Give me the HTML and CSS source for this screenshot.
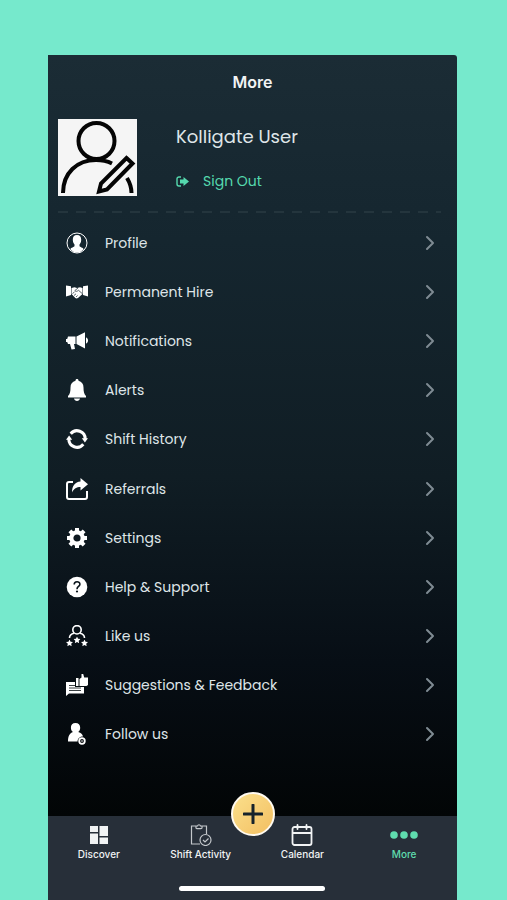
FILE: index.html
```html
<!DOCTYPE html>
<html lang="en">
<head>
    <meta charset="UTF-8">
    <meta name="viewport" content="width=device-width, initial-scale=1.0">
    <title>More</title>
    <link rel="stylesheet" href="styles.css">
</head>
<body>
    <!-- Shared shapes -->
    <svg class="sprite" aria-hidden="true">
        <symbol id="chevron" viewBox="0 0 10 16">
            <path d="M2 2l6 6-6 6" fill="none" stroke="currentColor" stroke-width="2" stroke-linecap="round" stroke-linejoin="round"/>
        </symbol>
        <symbol id="star" viewBox="0 0 10 10">
            <path d="M5 0l1.500 3.300 3.500.4-2.600 2.400.7 3.600L5 7.900 1.900 9.700l.7-3.600L0 3.700l3.500-.4z" fill="currentColor"/>
        </symbol>
    </svg>

    <div class="phone">
        <header class="title-bar">
            <h1>More</h1>
        </header>

        <section class="account">
            <button class="avatar" type="button" aria-label="Edit photo">
                <svg viewBox="0 0 79 77" fill="none" stroke="#050505" stroke-width="4">
                    <circle cx="38.500" cy="22" r="18"/>
                    <path d="M5 74C5 54 19 41 38 41c6 0 11 1 16 3.500M69 59c3 5 4.500 9 4.500 15"/>
                    <path d="M68.500 39l6 5.500L49 70.500l-8 2 2-8z" stroke-width="4"/>
                </svg>
            </button>
            <div class="account-info">
                <h2>Kolligate User</h2>
                <button class="sign-out" type="button">
                    <svg viewBox="0 0 13 11">
                        <path d="M5 1H3a2 2 0 0 0-2 2v5a2 2 0 0 0 2 2h2" fill="none" stroke="currentColor" stroke-width="1.400"/>
                        <path d="M7.500 1L13 5.500 7.500 10V7.500H4v-4h3.500z" fill="currentColor"/>
                    </svg>
                    Sign Out
                </button>
            </div>
        </section>

        <nav class="menu">
            <a class="menu-item" href="#profile">
                <svg class="icon" viewBox="0 0 22 22">
                    <circle cx="11" cy="11" r="10" fill="none" stroke="currentColor" stroke-width="1"/>
                    <path d="M11 3c3 0 4.200 2 4.200 4.700 0 2-.7 3.600-1.700 4.700v1.500c.4 1.300 3.300 1.300 4.300 3.300A9.500 9.500 0 0 1 11 20.500a9.500 9.500 0 0 1-6.800-3.300c1-2 3.900-2 4.300-3.300v-1.500c-1-1.100-1.700-2.700-1.700-4.700C6.800 5 8 3 11 3z" fill="currentColor"/>
                </svg>
                <span>Profile</span>
                <svg class="chevron"><use href="#chevron"/></svg>
            </a>
            <a class="menu-item" href="#permanent-hire">
                <svg class="icon" viewBox="0 0 22 22">
                    <path d="M0 4.500l5 .7v8.800L0 15.500zM22 4.500l-5 .7v8.800l5 1.500z" fill="currentColor"/>
                    <path d="M5.500 7l3-.8 2.500.8 3-.8 2.500.8v6l-4.500 4c-1 .7-2 .5-2.700 0L5.500 13z" fill="currentColor"/>
                    <path d="M12 7l-3.200 2.600c.9 1.200 2.500.8 3.700-.3l4 3.500M6.500 12.500l2-1.500M8 14.500l2-1.700M10 16l1.600-1.500" fill="none" stroke="#13232b" stroke-width=".7"/>
                </svg>
                <span>Permanent Hire</span>
                <svg class="chevron"><use href="#chevron"/></svg>
            </a>
            <a class="menu-item" href="#notifications">
                <svg class="icon" viewBox="0 0 22 22" fill="currentColor">
                    <path d="M2 6.500h7.500v7.500H8l1 5-3.500.5L4 14H2l-.8-2H0V9h1.200zM10.500 6.500l8.500-4.300v16.300L10.500 14zM20 7.500c2.700.7 2.700 5.300 0 6z"/>
                </svg>
                <span>Notifications</span>
                <svg class="chevron"><use href="#chevron"/></svg>
            </a>
            <a class="menu-item" href="#alerts">
                <svg class="icon" viewBox="0 0 22 22" fill="currentColor">
                    <path d="M11 0c1 0 1.500.7 1.500 1.700 3.300.8 5 3.300 5 6.800 0 4 .5 6.500 2.500 8.500V18.500H2V17c2-2 2.500-4.500 2.500-8.500 0-3.500 1.700-6 5-6.800C9.500.7 10 0 11 0zM8 19.500h6c-.3 1.600-1.500 2.500-3 2.500s-2.700-.9-3-2.500z"/>
                </svg>
                <span>Alerts</span>
                <svg class="chevron"><use href="#chevron"/></svg>
            </a>
            <a class="menu-item" href="#shift-history">
                <svg class="icon" viewBox="0 0 22 22">
                    <path d="M4.700 5.700A8.200 8.200 0 0 1 19.200 11M17.300 16.300A8.200 8.200 0 0 1 2.800 11" fill="none" stroke="currentColor" stroke-width="3"/>
                    <path d="M15.800 10.300H22L18.900 14.600zM6.200 11.700H0L3.100 7.400z" fill="currentColor"/>
                </svg>
                <span>Shift History</span>
                <svg class="chevron"><use href="#chevron"/></svg>
            </a>
            <a class="menu-item" href="#referrals">
                <svg class="icon" viewBox="0 0 22 22">
                    <path d="M7 4H3a2 2 0 0 0-2 2v13a2 2 0 0 0 2 2h16a2 2 0 0 0 2-2v-6" fill="none" stroke="currentColor" stroke-width="2"/>
                    <path d="M14.500 0L22 6.200l-7.500 6.300V9C10.500 9 8 10.500 6 14.500 6 8 9 4 14.500 3.500z" fill="currentColor"/>
                </svg>
                <span>Referrals</span>
                <svg class="chevron"><use href="#chevron"/></svg>
            </a>
            <a class="menu-item" href="#settings">
                <svg class="icon" viewBox="0 0 22 22" fill="none" stroke="currentColor">
                    <circle cx="11" cy="11" r="5.700" stroke-width="4.200"/>
                    <path d="M11 1v3M11 18v3M1 11h3M18 11h3M3.900 3.900L6 6M16 16l2.100 2.100M3.900 18.100L6 16M16 6l2.100-2.100" stroke-width="4"/>
                </svg>
                <span>Settings</span>
                <svg class="chevron"><use href="#chevron"/></svg>
            </a>
            <a class="menu-item" href="#help">
                <svg class="icon" viewBox="0 0 22 22">
                    <circle cx="11" cy="11" r="10.300" fill="currentColor"/>
                    <path d="M8.200 8.500c0-3.700 5.700-3.700 5.700-.3 0 2.300-2.900 2.300-2.900 5" fill="none" stroke="#0a141b" stroke-width="1.600"/>
                    <circle cx="11" cy="15.500" r="1.100" fill="#0a141b"/>
                </svg>
                <span>Help &amp; Support</span>
                <svg class="chevron"><use href="#chevron"/></svg>
            </a>
            <a class="menu-item" href="#like-us">
                <svg class="icon" viewBox="0 0 22 22">
                    <circle cx="11" cy="4.800" r="4.200" fill="none" stroke="currentColor" stroke-width="1.600"/>
                    <path d="M3.500 13c0-2.500 1.500-4 4.500-4.700M18.500 13c0-2.500-1.500-4-4.500-4.700" fill="none" stroke="currentColor" stroke-width="1.600"/>
                    <use href="#star" x="0" y="14.500" width="7" height="7"/>
                    <use href="#star" x="7.500" y="11.500" width="7" height="7"/>
                    <use href="#star" x="15" y="14.500" width="7" height="7"/>
                </svg>
                <span>Like us</span>
                <svg class="chevron"><use href="#chevron"/></svg>
            </a>
            <a class="menu-item" href="#feedback">
                <svg class="icon" viewBox="0 0 22 22">
                    <path d="M0 8h18v11.500H3L0 22z" fill="currentColor"/>
                    <path d="M3 11.500h12M3 14h12M3 16.500h12" stroke="#080f13" stroke-width=".8"/>
                    <path d="M9 3h13v10H9z" fill="#080f13"/>
                    <path d="M10 4h2.500v8H10zM13.500 5l2-1.500V0h1.700l1 3.500H22v7.500l-1.500 1h-7z" fill="currentColor"/>
                </svg>
                <span>Suggestions &amp; Feedback</span>
                <svg class="chevron"><use href="#chevron"/></svg>
            </a>
            <a class="menu-item" href="#follow-us">
                <svg class="icon" viewBox="0 0 22 22">
                    <path d="M9.500 0c3 0 4.700 2.100 4.700 4.700 0 1.800-.7 3.300-2 4.300 3 .8 4.300 2.500 4.800 4.500-3 0-5.500 2-5.500 5H2c0-5 1.500-8.500 5-9.500-1.400-1-2.100-2.500-2.100-4.300C4.900 2.100 6.500 0 9.500 0z" fill="currentColor"/>
                    <circle cx="16" cy="18" r="2.800" fill="none" stroke="currentColor" stroke-width="1.800"/>
                    <circle cx="16" cy="18" r=".8" fill="currentColor"/>
                </svg>
                <span>Follow us</span>
                <svg class="chevron"><use href="#chevron"/></svg>
            </a>
        </nav>

        <footer class="tab-bar">
            <button class="add" type="button" aria-label="Add">
                <svg viewBox="0 0 20 20"><path d="M10 1v18M1 10h18" stroke="#16232b" stroke-width="3" stroke-linecap="round"/></svg>
            </button>
            <nav class="tabs">
                <a class="tab" href="#discover">
                    <svg viewBox="0 0 22 22" fill="currentColor">
                        <path d="M2 2h8v6H2zM11.500 2H20v10h-8.500zM2 9.500h8V20H2zM11.500 13.500H20V20h-8.500z"/>
                    </svg>
                    Discover
                </a>
                <a class="tab" href="#shift-activity">
                    <svg viewBox="0 0 22 22" fill="none" stroke="#c3c7cb" stroke-width="1.200">
                        <path d="M6 2H1.500v18H10M12 2h4.500v8M6 4V2h1.500C8 .3 10 .3 10.500 2H12v2c0 1-6 1-6 0z"/>
                        <circle cx="15.500" cy="16" r="5.500"/>
                        <path d="M13 16l2 2 3.500-3.500"/>
                    </svg>
                    Shift Activity
                </a>
                <a class="tab" href="#calendar">
                    <svg viewBox="0 0 22 22" fill="none" stroke="currentColor" stroke-width="1.800" stroke-linecap="round">
                        <rect x="1.500" y="3" width="19" height="18" rx="2"/>
                        <path d="M2 9h18M6.500 1v4M15.500 1v4"/>
                    </svg>
                    Calendar
                </a>
                <a class="tab active" href="#more">
                    <svg class="dots" viewBox="0 0 28 22" fill="currentColor">
                        <circle cx="4" cy="11" r="3.800"/>
                        <circle cx="14" cy="11" r="3.800"/>
                        <circle cx="24" cy="11" r="3.800"/>
                    </svg>
                    More
                </a>
            </nav>
            <div class="home-indicator"></div>
        </footer>
    </div>
</body>
</html>
```
FILE: styles.css
```css
* {
    box-sizing: border-box;
}

body {
    margin: 0;
    padding: 55px 50px 0 48px;
    min-height: 100vh;
    display: flex;
    background-color: #76e9cc;
    color: #dfe5e8;
    font-family: Poppins, Inter, sans-serif;
}

h1, h2 {
    margin: 0;
}

button {
    padding: 0;
    border: 0;
    background: none;
    color: inherit;
    font: inherit;
    cursor: pointer;
}

a {
    color: inherit;
    text-decoration: none;
}

.sprite {
    position: absolute;
    width: 0;
    height: 0;
}

.phone {
    flex: 1;
    display: flex;
    flex-direction: column;
    border-radius: 0 3px 0 0;
    background: linear-gradient(#1b2c35, #15262f 22%, #101d24 50%, #070e15 72%, #020506 90%);
    overflow: hidden;
}

.title-bar {
    padding: 15px 0 17px;
    text-align: center;
}

.title-bar h1 {
    color: #f1f4f5;
    font-family: Inter, sans-serif;
    font-size: 16px;
    font-weight: 600;
    line-height: 24px;
}

/* Account block, with the dashed rule under it */
.account {
    display: flex;
    gap: 39px;
    margin: 8px 16px 0 10px;
    padding-bottom: 17px;
    background: repeating-linear-gradient(90deg, #24353d 0 10px, transparent 10px 18px) bottom / 100% 2px no-repeat;
}

.avatar {
    width: 79px;
    height: 77px;
    background-color: #f5f5f5;
}

.avatar svg {
    display: block;
}

.account-info {
    display: flex;
    flex-direction: column;
    align-items: flex-start;
    gap: 20px;
    padding-top: 4px;
}

.account-info h2 {
    font-size: 18px;
    font-weight: 400;
    line-height: 28px;
}

.sign-out {
    display: flex;
    align-items: center;
    gap: 14px;
    color: #55d9ae;
    font-size: 14px;
    line-height: 20px;
}

.sign-out svg {
    width: 13px;
    height: 11px;
}

.menu {
    flex: 1;
    display: flex;
    flex-direction: column;
    margin: 5px 22px 57px 18px;
}

.menu-item {
    flex: 1;
    display: flex;
    align-items: center;
    gap: 17px;
    min-height: 40px;
    font-size: 14px;
    line-height: 20px;
}

.icon {
    width: 22px;
    height: 22px;
    color: #fff;
}

.chevron {
    width: 10px;
    height: 16px;
    margin-left: auto;
    color: #7f8b93;
}

.tab-bar {
    position: relative;
    display: flex;
    flex-direction: column;
    align-items: center;
    height: 84px;
    padding: 8px 2px 9px 0;
    background-color: #272f39;
}

/* Sits over the top edge of the bar */
.add {
    position: absolute;
    top: -24px;
    left: 50%;
    display: grid;
    place-items: center;
    width: 44px;
    height: 44px;
    border: 2px solid #fffaf0;
    border-radius: 50%;
    background: linear-gradient(135deg, #fbe08c, #f3bf62);
    transform: translateX(-50%);
}

.add svg {
    width: 20px;
    height: 20px;
}

.tabs {
    display: grid;
    grid-template-columns: repeat(4, 1fr);
    width: 100%;
}

.tab {
    display: flex;
    flex-direction: column;
    align-items: center;
    color: #f1f3f4;
    font-family: Inter, sans-serif;
    font-size: 10px;
    font-weight: 500;
    line-height: 16px;
}

.tab svg {
    width: 22px;
    height: 22px;
}

.tab .dots {
    width: 28px;
}

.tab.active {
    color: #5fdcae;
}

.home-indicator {
    width: 146px;
    height: 5px;
    margin-top: auto;
    border-radius: 3px;
    background-color: #fff;
}
```
